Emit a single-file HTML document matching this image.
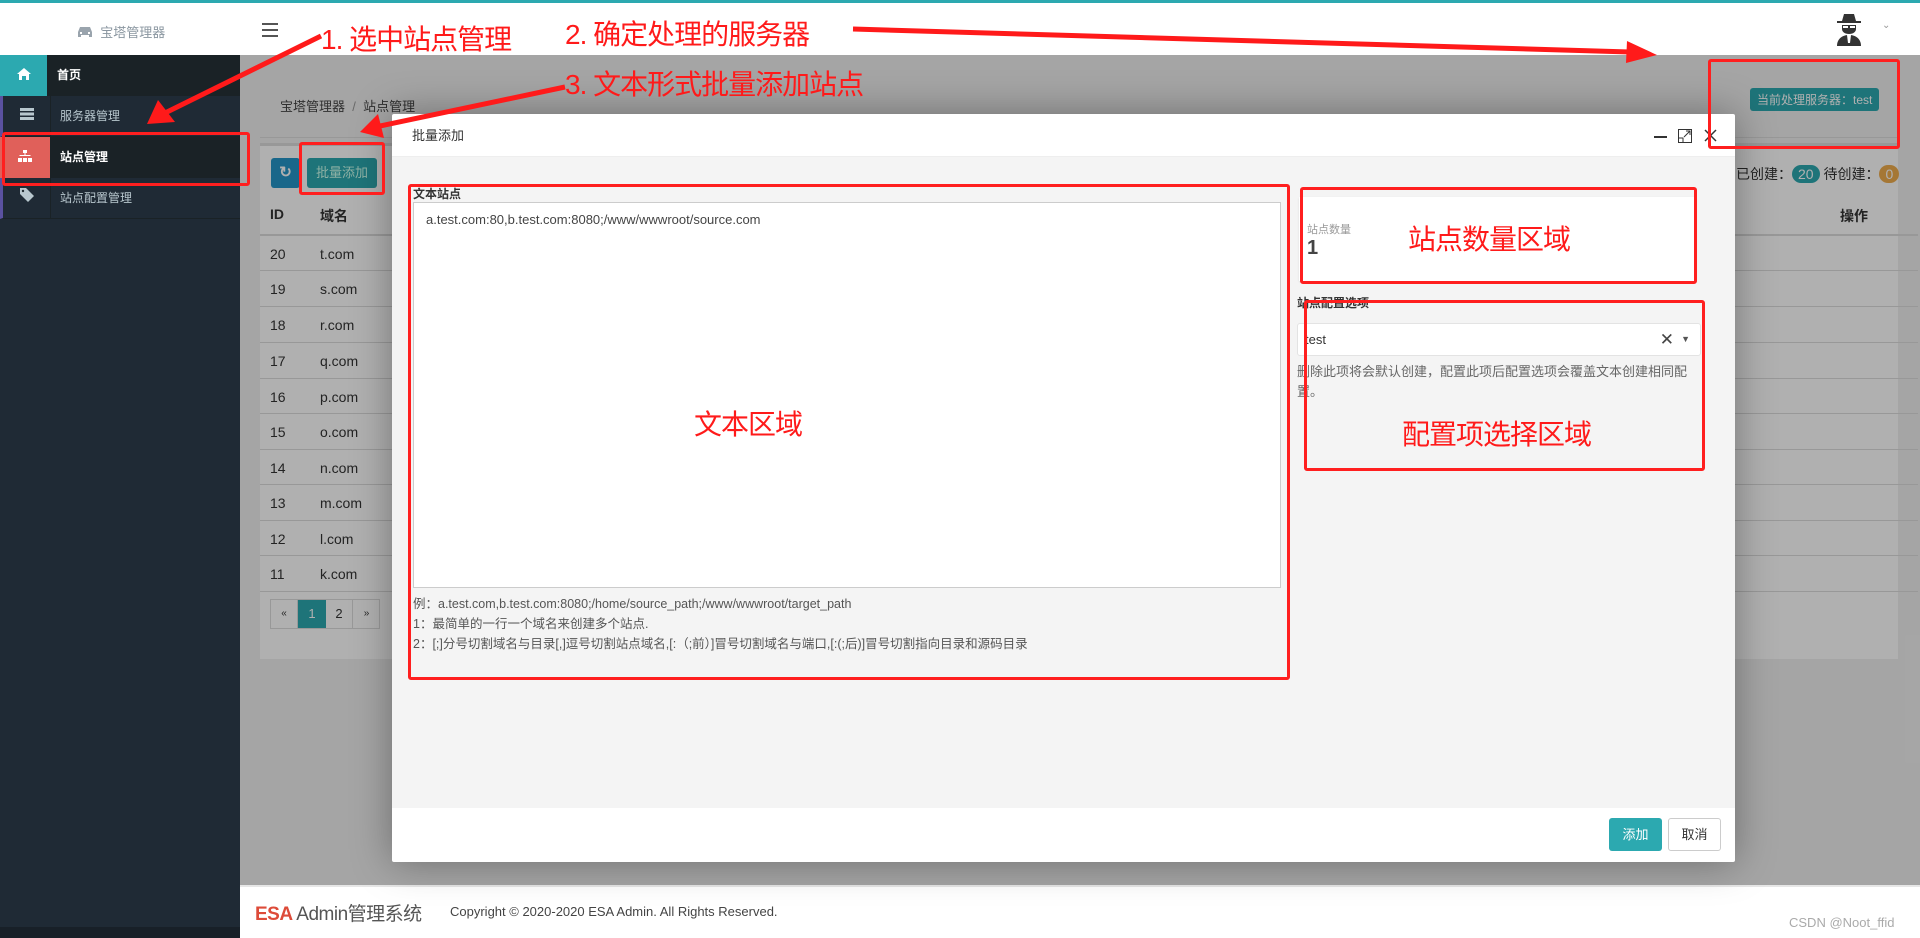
<!DOCTYPE html>
<html><head><meta charset="utf-8">
<style>
*{box-sizing:border-box;margin:0;padding:0}
body{width:1920px;height:938px;overflow:hidden;position:relative;font-family:"Liberation Sans","Noto Sans CJK SC",sans-serif;font-size:13px;color:#333;background:#fff}
.abs{position:absolute}
.topline{left:0;top:0;width:1920px;height:3px;background:#2ca9b0}
.header{left:0;top:3px;width:1920px;height:52px;background:#fff}
.side{left:0;top:55px;width:240px;height:883px;background:#1f2a35}
.mi{position:absolute;left:0;width:240px;height:41px;color:#b8c7ce;font-size:12px;line-height:41px;border-bottom:1px solid #1a2226}
.mi .ic{position:absolute;left:0;top:0;width:48px;height:41px;border-right:1px solid #1a2226;text-align:center}
.mi span{position:absolute;left:57px}
.content{left:240px;top:55px;width:1680px;height:830px;background:#f0f0f0}
.box{background:#fff;border-top:3px solid #ddd}
.overlay{left:240px;top:55px;width:1680px;height:830px;background:rgba(0,0,0,0.31)}
.footer{left:240px;top:885px;width:1680px;height:53px;background:#fff;border-top:2px solid #e6e6e6}
.modal{left:392px;top:114px;width:1343px;height:748px;background:#fff;box-shadow:0 0 40px rgba(0,0,0,.35);border-radius:2px}
.red{position:absolute;border:3px solid #ff1f1f;border-radius:3px}
.ann{position:absolute;color:#ff1a1a;font-size:28px;font-family:"Liberation Sans","Noto Sans CJK SC",sans-serif;white-space:nowrap;letter-spacing:-1px}
.row{position:absolute;left:0;width:1658px;height:36px;border-top:1px solid #ddd;font-size:14px;line-height:36px}
</style></head><body>
<div class="abs topline"></div>
<div class="abs header">
  <div class="abs" style="left:77px;top:19px;font-size:13px;color:#8a96a0">
    <svg width="16" height="12" viewBox="0 0 16 12" style="vertical-align:-1px"><path d="M3 1h10l2 5v5h-3v-2H4v2H1V6z" fill="#9aa4ad"/><rect x="3" y="6" width="2" height="2" fill="#fff"/><rect x="11" y="6" width="2" height="2" fill="#fff"/></svg>
    &nbsp;宝塔管理器</div>
  <div class="abs" style="left:262px;top:20px;width:16px">
    <div style="height:2px;background:#555;margin-bottom:4px"></div><div style="height:2px;background:#555;margin-bottom:4px"></div><div style="height:2px;background:#555"></div></div>
  <svg class="abs" style="left:1834px;top:9px" width="30" height="34" viewBox="0 0 30 34"><path d="M8 9l2-7h10l2 7h5v2H3V9z" fill="#333"/><path d="M8 13h14v4c0 3-3 5-7 5s-7-2-7-5z" fill="#333"/><rect x="9" y="14" width="5" height="2" fill="#fff"/><rect x="16" y="14" width="5" height="2" fill="#fff"/><path d="M3 34c0-7 5-11 12-11s12 4 12 11z" fill="#333"/><path d="M13 23h4l-1 8h-2z" fill="#fff"/></svg>
  <div class="abs" style="left:1882px;top:17px;color:#999;font-size:10px">&#8964;</div>
</div>
<div class="abs side">
  <div class="mi" style="top:0;color:#fff;font-weight:bold;background:#1a2226"><div class="ic" style="background:#2ca9b0"><svg width="14" height="12" viewBox="0 0 14 12" style="vertical-align:-1px"><path d="M7 0l7 6h-2v6H9V8H5v4H2V6H0z" fill="#fff"/></svg></div><span>首页</span></div>
  <div class="mi" style="top:41px;border-left:3px solid #5a51a0"><div class="ic"><svg width="14" height="12" viewBox="0 0 14 12"><rect y="0" width="14" height="3" fill="#b8c7ce"/><rect y="4.5" width="14" height="3" fill="#b8c7ce"/><rect y="9" width="14" height="3" fill="#b8c7ce"/></svg></div><span>服务器管理</span></div>
  <div class="mi" style="top:82px;color:#fff;font-weight:bold;background:#1a2226;border-left:3px solid #5a51a0"><div class="ic" style="background:#e0605a;left:-3px;width:51px"><svg width="14" height="12" viewBox="0 0 14 12" style="vertical-align:-1px"><rect x="5" y="0" width="4" height="3" fill="#fff"/><rect x="6.5" y="3" width="1" height="3" fill="#fff"/><rect x="1.5" y="5" width="11" height="1" fill="#fff"/><rect x="0" y="8" width="4" height="4" fill="#fff"/><rect x="5" y="8" width="4" height="4" fill="#fff"/><rect x="10" y="8" width="4" height="4" fill="#fff"/></svg></div><span>站点管理</span></div>
  <div class="mi" style="top:123px;border-left:3px solid #5a51a0"><div class="ic"><svg width="14" height="14" viewBox="0 0 14 14"><path d="M0 0h6l8 8-6 6-8-8z" fill="#b8c7ce"/><circle cx="3" cy="3" r="1.2" fill="#222d32"/></svg></div><span>站点配置管理</span></div>
  <div class="abs" style="left:0;top:872px;width:240px;height:11px;background:#182028"></div>
</div>
<div class="abs content">
  <div class="abs box" style="left:20px;top:21px;width:1638px;height:62px;border-top:0;background:#f0f0f0;border-bottom:1px solid #ddd">
    <div class="abs" style="left:20px;top:20px;font-size:13px;color:#444">宝塔管理器 &nbsp;<span style="color:#999">/</span>&nbsp; 站点管理</div>
    <div class="abs" style="left:1490px;top:12px;background:#2ca9b0;color:#fff;font-size:12px;padding:3px 7px;border-radius:3px">当前处理服务器：test</div>
  </div>
  <div class="abs box" style="left:20px;top:88px;width:1638px;height:516px">
    <div class="abs" style="left:11px;top:12px;width:29px;height:30px;background:#2596c8;border-radius:3px;color:#fff;text-align:center;line-height:30px;font-size:15px;font-weight:bold">↻</div>
    <div class="abs" style="left:47px;top:12px;width:70px;height:30px;background:#2ca9b0;border-radius:3px;color:#cfe;line-height:30px;text-align:center">批量添加</div>
    <div class="abs" style="left:1476px;top:18px;font-size:14px;white-space:nowrap">已创建：<span style="background:#2ca9b0;color:#fff;border-radius:10px;padding:1px 6px">20</span> 待创建：<span style="background:#f0ad4e;color:#fff;border-radius:10px;padding:1px 6px">0</span></div>
    <div class="abs" style="left:10px;top:60px;font-weight:bold;font-size:14px">ID</div>
    <div class="abs" style="left:60px;top:60px;font-weight:bold;font-size:14px">域名</div>
    <div class="abs" style="left:1580px;top:60px;font-weight:bold;font-size:14px">操作</div>
    <div class="row" style="top:88px;border-top:2px solid #ddd"><span style="position:absolute;left:10px">20</span><span style="position:absolute;left:60px">t.com</span></div>
    <div class="row" style="top:124px"><span style="position:absolute;left:10px">19</span><span style="position:absolute;left:60px">s.com</span></div>
    <div class="row" style="top:160px"><span style="position:absolute;left:10px">18</span><span style="position:absolute;left:60px">r.com</span></div>
    <div class="row" style="top:196px"><span style="position:absolute;left:10px">17</span><span style="position:absolute;left:60px">q.com</span></div>
    <div class="row" style="top:232px"><span style="position:absolute;left:10px">16</span><span style="position:absolute;left:60px">p.com</span></div>
    <div class="row" style="top:267px"><span style="position:absolute;left:10px">15</span><span style="position:absolute;left:60px">o.com</span></div>
    <div class="row" style="top:303px"><span style="position:absolute;left:10px">14</span><span style="position:absolute;left:60px">n.com</span></div>
    <div class="row" style="top:338px"><span style="position:absolute;left:10px">13</span><span style="position:absolute;left:60px">m.com</span></div>
    <div class="row" style="top:374px"><span style="position:absolute;left:10px">12</span><span style="position:absolute;left:60px">l.com</span></div>
    <div class="row" style="top:409px"><span style="position:absolute;left:10px">11</span><span style="position:absolute;left:60px">k.com</span></div>
    <div class="row" style="top:445px;border-top:1px solid #ddd"></div>
    <div class="abs" style="left:10px;top:453px;width:110px;height:30px;border:1px solid #ddd;font-size:13px;line-height:28px;background:#fff">
      <span style="position:absolute;left:0;width:27px;text-align:center;font-size:10px;border-right:1px solid #ddd;height:28px">«</span>
      <span style="position:absolute;left:27px;width:28px;height:28px;background:#2ca9b0;color:#fff;text-align:center">1</span>
      <span style="position:absolute;left:55px;width:27px;text-align:center;border-right:1px solid #ddd;height:28px">2</span>
      <span style="position:absolute;left:82px;width:27px;text-align:center;font-size:10px">»</span></div>
  </div>
</div>
<div class="abs overlay"></div>
<div class="abs footer">
  <div class="abs" style="left:15px;top:12px;font-size:19px;color:#555;letter-spacing:-0.5px"><b style="color:#dd4b39;font-weight:bold">ESA</b> Admin管理系统</div>
  <div class="abs" style="left:210px;top:17px;font-size:13px;color:#444">Copyright © 2020-2020 ESA Admin. All Rights Reserved.</div>
  <div class="abs" style="left:1549px;top:28px;font-size:13px;color:#aaa">CSDN @Noot_ffid</div>
</div>
<div class="abs modal">
  <div class="abs" style="left:0;top:0;width:1343px;height:43px;border-bottom:1px solid #eee;font-size:13px;line-height:43px;padding-left:20px;color:#333">批量添加</div>
  <div class="abs" style="left:1262px;top:22px;width:13px;height:2px;background:#333"></div>
  <svg class="abs" style="left:1286px;top:15px" width="14" height="14" viewBox="0 0 14 14"><rect x="0.5" y="0.5" width="13" height="13" fill="none" stroke="#333"/><rect x="0.5" y="9" width="4.5" height="4.5" fill="none" stroke="#333"/><path d="M6 8l6-6M8 2h4v4" fill="none" stroke="#333"/></svg>
  <svg class="abs" style="left:1312px;top:15px" width="13" height="13" viewBox="0 0 13 13"><path d="M1 1l11 11M12 1L1 12" stroke="#333" stroke-width="1.5"/></svg>
  <div class="abs" style="left:0;top:43px;width:1343px;height:651px;background:#f4f4f4">
    <div class="abs" style="left:21px;top:30px;font-size:12px;line-height:14px;font-weight:bold;color:#333">文本站点</div>
    <div class="abs" style="left:21px;top:45px;width:868px;height:386px;background:#fff;border:1px solid #ccc;padding:9px 12px;font-size:13px;color:#444">a.test.com:80,b.test.com:8080;/www/wwwroot/source.com</div>
    <div class="abs" style="left:21px;top:437px;font-size:12.5px;color:#555;line-height:20px">例：a.test.com,b.test.com:8080;/home/source_path;/www/wwwroot/target_path<br>1：最简单的一行一个域名来创建多个站点.<br>2：[;]分号切割域名与目录[,]逗号切割站点域名,[:（;前）]冒号切割域名与端口,[:(;后)]冒号切割指向目录和源码目录</div>
    <div class="abs" style="left:907px;top:40px;width:397px;height:84px;background:#fff;box-shadow:0 1px 2px rgba(0,0,0,.1)">
      <div class="abs" style="left:8px;top:24px;font-size:11px;color:#999">站点数量</div>
      <div class="abs" style="left:8px;top:40px;font-size:20px;font-weight:bold;color:#444">1</div>
    </div>
    <div class="abs" style="left:905px;top:137px;font-size:12px;font-weight:bold;color:#333">站点配置选项</div>
    <div class="abs" style="left:905px;top:166px;width:404px;height:33px;background:#fff;border:1px solid #e3e3e3;border-radius:3px;font-size:13px;line-height:31px;padding-left:7px;color:#333">test<span style="position:absolute;right:26px;font-size:17px;color:#444">✕</span><span style="position:absolute;right:10px;font-size:9px;color:#555">▼</span></div>
    <div class="abs" style="left:905px;top:205px;width:392px;font-size:13px;color:#666;line-height:20px">删除此项将会默认创建，配置此项后配置选项会覆盖文本创建相同配置。</div>
  </div>
  <div class="abs" style="left:1217px;top:704px;width:53px;height:33px;background:#2ca9b0;border-radius:3px;color:#fff;font-size:13px;line-height:33px;text-align:center">添加</div>
  <div class="abs" style="left:1276px;top:704px;width:53px;height:33px;border:1px solid #ccc;border-radius:3px;color:#333;font-size:13px;line-height:31px;text-align:center;background:#fff">取消</div>
</div>
<!-- annotations -->
<div class="red" style="left:2px;top:132px;width:248px;height:54px"></div>
<div class="red" style="left:299px;top:142px;width:86px;height:53px"></div>
<div class="red" style="left:408px;top:184px;width:882px;height:496px"></div>
<div class="red" style="left:1300px;top:187px;width:397px;height:97px"></div>
<div class="red" style="left:1304px;top:300px;width:401px;height:171px"></div>
<div class="red" style="left:1708px;top:59px;width:192px;height:90px"></div>
<div class="ann" style="left:321px;top:18px">1. 选中站点管理</div>
<div class="ann" style="left:565px;top:13px">2. 确定处理的服务器</div>
<div class="ann" style="left:565px;top:63px">3. 文本形式批量添加站点</div>
<div class="ann" style="left:694px;top:403px">文本区域</div>
<div class="ann" style="left:1408px;top:218px">站点数量区域</div>
<div class="ann" style="left:1402px;top:413px">配置项选择区域</div>
<svg class="abs" style="left:0;top:0" width="1920" height="938">
  <line x1="321" y1="36" x2="165" y2="113" stroke="#ff1a1a" stroke-width="5"/>
  <polygon points="147,124 158,100 175,122" fill="#ff1a1a"/>
  <line x1="853" y1="29" x2="1630" y2="52" stroke="#ff1a1a" stroke-width="5"/>
  <polygon points="1657,55 1627,41 1626,63" fill="#ff1a1a"/>
  <line x1="565" y1="87" x2="380" y2="126" stroke="#ff1a1a" stroke-width="5"/>
  <polygon points="360,132 378,114 384,138" fill="#ff1a1a"/>
</svg>
</body></html>
